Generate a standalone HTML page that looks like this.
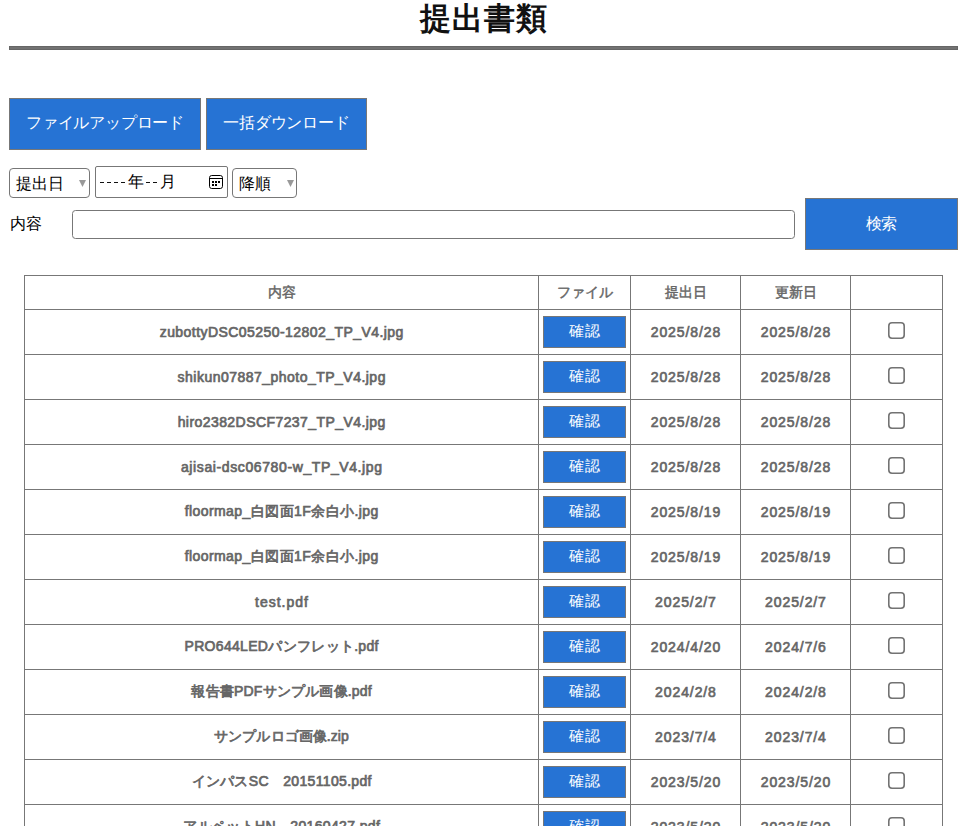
<!DOCTYPE html>
<html lang="ja">
<head>
<meta charset="utf-8">
<style>
html,body{margin:0;padding:0;background:#fff;}
body{width:961px;height:826px;overflow:hidden;position:relative;font-family:"Liberation Sans",sans-serif;color:#000;}
.abs{position:absolute;}
h1{position:absolute;left:0;top:0;width:966px;margin:0;text-align:center;font-size:31px;font-weight:bold;line-height:38px;color:#111;letter-spacing:1px;text-indent:1px;}
.rule{position:absolute;left:9px;top:46px;width:949px;height:4px;background:#727272;box-shadow:inset 0 1px 0 #666,inset 0 -1px 0 #666,inset 1px 0 0 #666,inset -1px 0 0 #666;}
.btn{position:absolute;box-sizing:border-box;background:#2673d4;border:1px solid #777;color:#fff;font-size:16px;text-align:center;letter-spacing:-0.2px;}
.sel{position:absolute;box-sizing:border-box;border:1px solid #777;border-radius:4px;background:#fff;font-size:16px;}
.sel .arr{position:absolute;width:0;height:0;border-left:3.5px solid transparent;border-right:3.5px solid transparent;border-top:7px solid #888;}
.date{position:absolute;box-sizing:border-box;border:1px solid #777;background:#fff;font-size:16px;}
.dash{position:absolute;top:15px;width:4px;height:1.4px;background:#111;}
.inp{position:absolute;box-sizing:border-box;border:1px solid #777;border-radius:3.5px;background:#fff;}
table{position:absolute;left:24px;top:275px;border-collapse:collapse;table-layout:fixed;width:918px;}
td,th{border:1px solid #777;padding:0;text-align:center;color:#666;font-weight:normal;-webkit-text-stroke:0.45px #666;font-size:15px;}
td.f{font-size:14px;-webkit-text-stroke:0.7px #666;}
td.d{font-size:14px;-webkit-text-stroke:0.65px #666;letter-spacing:0.9px;text-indent:0.9px;}
th{height:33px;font-size:14px;}
td{height:44px;}
.cb{display:inline-block;width:17px;height:17px;vertical-align:middle;position:relative;top:-2px;left:0px;}
.kb{display:inline-block;box-sizing:border-box;width:83px;height:32px;background:#2673d4;border:1px solid #777;color:#fff;font-weight:normal;-webkit-text-stroke:0;font-size:15px;letter-spacing:1.5px;text-indent:1.5px;line-height:28px;vertical-align:middle;}
</style>
</head>
<body>
<h1>提出書類</h1>
<div class="rule"></div>

<div class="btn" style="left:9px;top:98px;width:192px;height:52px;line-height:47px;">ファイルアップロード</div>
<div class="btn" style="left:206px;top:98px;width:161px;height:52px;line-height:48px;">一括ダウンロード</div>

<div class="sel" style="left:9px;top:168px;width:81px;height:30px;"><span class="abs" style="left:6px;top:6px;line-height:18px;">提出日</span><svg class="abs" style="left:69px;top:11px" width="7" height="7" viewBox="0 0 7 7"><polygon points="0,0 7,0 3.5,7" fill="#999"/></svg></div>
<div class="date" style="left:95px;top:166px;width:133px;height:32px;border-radius:2px;">
<span class="dash" style="left:4px"></span><span class="dash" style="left:11px"></span><span class="dash" style="left:18px"></span><span class="dash" style="left:25px"></span>
<span class="abs" style="left:32px;top:6px;line-height:18px;">年</span>
<span class="dash" style="left:50px"></span><span class="dash" style="left:57px"></span>
<span class="abs" style="left:64px;top:6px;line-height:18px;">月</span>
<svg class="abs" style="left:113px;top:8px" width="14" height="14" viewBox="0 0 14 14"><rect x="0.5" y="0.5" width="13" height="13" rx="2.2" fill="none" stroke="#000" stroke-width="1"/><line x1="0.5" y1="3.5" x2="13.5" y2="3.5" stroke="#000" stroke-width="1"/><rect x="3" y="6" width="2" height="2"/><rect x="6" y="6" width="2" height="2"/><rect x="9" y="6" width="2" height="2"/><rect x="3" y="9" width="2" height="2"/><rect x="6" y="9" width="2" height="2"/></svg>
</div>
<div class="sel" style="left:232px;top:168px;width:65px;height:30px;"><span class="abs" style="left:6px;top:6px;line-height:18px;">降順</span><svg class="abs" style="left:54px;top:11px" width="7" height="7" viewBox="0 0 7 7"><polygon points="0,0 7,0 3.5,7" fill="#999"/></svg></div>

<div class="abs" style="left:10px;top:215px;font-size:16px;line-height:18px;">内容</div>
<div class="inp" style="left:72px;top:210px;width:723px;height:29px;"></div>
<div class="btn" style="left:805px;top:198px;width:153px;height:52px;line-height:50px;">検索</div>

<table>
<colgroup><col style="width:514px"><col style="width:92px"><col style="width:110px"><col style="width:110px"><col style="width:92px"></colgroup>
<tr><th>内容</th><th>ファイル</th><th>提出日</th><th>更新日</th><th></th></tr>
<tr><td class="f" style="letter-spacing:0.44px;text-indent:0.44px">zubottyDSC05250-12802_TP_V4.jpg</td><td><span class="kb">確認</span></td><td class="d">2025/8/28</td><td class="d">2025/8/28</td><td><svg class="cb" width="17" height="17" viewBox="0 0 17 17"><rect x="0.8" y="0.8" width="15.4" height="15.4" rx="3.2" fill="#fff" stroke="#737373" stroke-width="1.6"/></svg></td></tr>
<tr><td class="f" style="letter-spacing:0.48px;text-indent:0.48px">shikun07887_photo_TP_V4.jpg</td><td><span class="kb">確認</span></td><td class="d">2025/8/28</td><td class="d">2025/8/28</td><td><svg class="cb" width="17" height="17" viewBox="0 0 17 17"><rect x="0.8" y="0.8" width="15.4" height="15.4" rx="3.2" fill="#fff" stroke="#737373" stroke-width="1.6"/></svg></td></tr>
<tr><td class="f" style="letter-spacing:0.43px;text-indent:0.43px">hiro2382DSCF7237_TP_V4.jpg</td><td><span class="kb">確認</span></td><td class="d">2025/8/28</td><td class="d">2025/8/28</td><td><svg class="cb" width="17" height="17" viewBox="0 0 17 17"><rect x="0.8" y="0.8" width="15.4" height="15.4" rx="3.2" fill="#fff" stroke="#737373" stroke-width="1.6"/></svg></td></tr>
<tr><td class="f" style="letter-spacing:0.61px;text-indent:0.61px">ajisai-dsc06780-w_TP_V4.jpg</td><td><span class="kb">確認</span></td><td class="d">2025/8/28</td><td class="d">2025/8/28</td><td><svg class="cb" width="17" height="17" viewBox="0 0 17 17"><rect x="0.8" y="0.8" width="15.4" height="15.4" rx="3.2" fill="#fff" stroke="#737373" stroke-width="1.6"/></svg></td></tr>
<tr><td class="f" style="letter-spacing:0.42px;text-indent:0.42px">floormap_白図面1F余白小.jpg</td><td><span class="kb">確認</span></td><td class="d">2025/8/19</td><td class="d">2025/8/19</td><td><svg class="cb" width="17" height="17" viewBox="0 0 17 17"><rect x="0.8" y="0.8" width="15.4" height="15.4" rx="3.2" fill="#fff" stroke="#737373" stroke-width="1.6"/></svg></td></tr>
<tr><td class="f" style="letter-spacing:0.42px;text-indent:0.42px">floormap_白図面1F余白小.jpg</td><td><span class="kb">確認</span></td><td class="d">2025/8/19</td><td class="d">2025/8/19</td><td><svg class="cb" width="17" height="17" viewBox="0 0 17 17"><rect x="0.8" y="0.8" width="15.4" height="15.4" rx="3.2" fill="#fff" stroke="#737373" stroke-width="1.6"/></svg></td></tr>
<tr><td class="f" style="letter-spacing:1.0px;text-indent:1.0px">test.pdf</td><td><span class="kb">確認</span></td><td class="d">2025/2/7</td><td class="d">2025/2/7</td><td><svg class="cb" width="17" height="17" viewBox="0 0 17 17"><rect x="0.8" y="0.8" width="15.4" height="15.4" rx="3.2" fill="#fff" stroke="#737373" stroke-width="1.6"/></svg></td></tr>
<tr><td class="f" style="letter-spacing:0.31px;text-indent:0.31px">PRO644LEDパンフレット.pdf</td><td><span class="kb">確認</span></td><td class="d">2024/4/20</td><td class="d">2024/7/6</td><td><svg class="cb" width="17" height="17" viewBox="0 0 17 17"><rect x="0.8" y="0.8" width="15.4" height="15.4" rx="3.2" fill="#fff" stroke="#737373" stroke-width="1.6"/></svg></td></tr>
<tr><td class="f" style="letter-spacing:0.2px;text-indent:0.2px">報告書PDFサンプル画像.pdf</td><td><span class="kb">確認</span></td><td class="d">2024/2/8</td><td class="d">2024/2/8</td><td><svg class="cb" width="17" height="17" viewBox="0 0 17 17"><rect x="0.8" y="0.8" width="15.4" height="15.4" rx="3.2" fill="#fff" stroke="#737373" stroke-width="1.6"/></svg></td></tr>
<tr><td class="f" style="letter-spacing:0.05px;text-indent:0.05px">サンプルロゴ画像.zip</td><td><span class="kb">確認</span></td><td class="d">2023/7/4</td><td class="d">2023/7/4</td><td><svg class="cb" width="17" height="17" viewBox="0 0 17 17"><rect x="0.8" y="0.8" width="15.4" height="15.4" rx="3.2" fill="#fff" stroke="#737373" stroke-width="1.6"/></svg></td></tr>
<tr><td class="f" style="letter-spacing:0.33px;text-indent:0.33px">インパスSC　20151105.pdf</td><td><span class="kb">確認</span></td><td class="d">2023/5/20</td><td class="d">2023/5/20</td><td><svg class="cb" width="17" height="17" viewBox="0 0 17 17"><rect x="0.8" y="0.8" width="15.4" height="15.4" rx="3.2" fill="#fff" stroke="#737373" stroke-width="1.6"/></svg></td></tr>
<tr><td class="f" style="letter-spacing:0.36px;text-indent:0.36px">アルペットHN　20160427.pdf</td><td><span class="kb">確認</span></td><td class="d">2023/5/20</td><td class="d">2023/5/20</td><td><svg class="cb" width="17" height="17" viewBox="0 0 17 17"><rect x="0.8" y="0.8" width="15.4" height="15.4" rx="3.2" fill="#fff" stroke="#737373" stroke-width="1.6"/></svg></td></tr>
</table>
</body>
</html>
